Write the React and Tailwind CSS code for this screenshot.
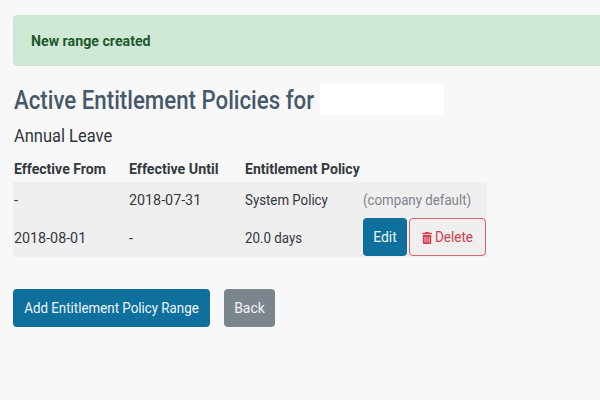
import React from "react";
import { FaTrashAlt } from "react-icons/fa";

export default function App() {
  return (
    <div className="w-[600px] h-[400px] overflow-hidden bg-[#f8f8f9] pt-[15px] pl-[13px] font-['Roboto',sans-serif] text-[#33393f] text-[14.5px]">
      <div className="w-[600px] h-[51px] flex items-center pl-[17px] pt-[2px] bg-[#d0e9d6] border border-[#c6e4ce] rounded-l-[4px] font-bold text-[#1d5a2c] text-[14.2px]">
        New range created
      </div>
      <div className="mt-[18px] h-[31px] flex items-center text-[25px] font-medium text-[#46596b] leading-none">
        <span className="ml-[1px] w-[301px] pt-[2px] whitespace-nowrap origin-left scale-x-[0.89]">Active Entitlement Policies for</span>
        <span className="ml-[5px] w-[124px] h-[31px] bg-white"></span>
      </div>
      <div className="mt-[10px] ml-[1px] text-[17.5px] leading-[22px] text-[#2f353a] origin-left scale-x-[0.942]">Annual Leave</div>
      <table className="mt-[8px] w-[474px] border-collapse table-fixed">
        <thead>
          <tr className="h-[27px] text-left font-bold text-[#33393f] text-[14.5px]">
            <th className="w-[116px] font-bold p-0 pt-[2px]"><span className="block ml-[1px] whitespace-nowrap origin-left scale-x-[0.97]">Effective From</span></th>
            <th className="w-[116px] font-bold p-0 pt-[2px]"><span className="block whitespace-nowrap origin-left scale-x-[0.98]">Effective Until</span></th>
            <th className="w-[118px] font-bold p-0 pt-[2px]"><span className="block whitespace-nowrap origin-left scale-x-[0.967]">Entitlement Policy</span></th>
            <th className="p-0"></th>
          </tr>
        </thead>
        <tbody className="bg-[#efefef]">
          <tr className="h-[36px]">
            <td className="p-0 pt-[2px] pl-[1px]">-</td>
            <td className="p-0 pt-[2px] text-[14.3px]">2018-07-31</td>
            <td className="p-0 pt-[2px]"><span className="block whitespace-nowrap origin-left scale-x-[0.915]">System Policy</span></td>
            <td className="p-0 pt-[2px] text-[#7d858c]"><span className="block whitespace-nowrap origin-left scale-x-[0.915]">(company default)</span></td>
          </tr>
          <tr className="h-[39px]">
            <td className="p-0 pt-[2px] pl-[1px] text-[14.3px]">2018-08-01</td>
            <td className="p-0 pt-[2px]">-</td>
            <td className="p-0 pt-[2px]"><span className="block whitespace-nowrap origin-left scale-x-[0.92]">20.0 days</span></td>
            <td className="p-0">
              <div className="flex items-center gap-[2px] h-[39px] pb-[1px]">
                <button className="w-[44px] h-[38px] pt-[2px] rounded-[4px] bg-[#0f6f9d] text-[#eef6fa]"><span className="block scale-x-[0.96]">Edit</span></button>
                <button className="w-[77px] h-[38px] pt-[2px] rounded-[4px] border border-[#d9606c] text-[#d23c4b]">
                  <span className="flex items-center justify-center gap-[3px] scale-x-[0.93]">
                    <FaTrashAlt className="w-[11px] h-[12px]" />
                    <span>Delete</span>
                  </span>
                </button>
              </div>
            </td>
          </tr>
        </tbody>
      </table>
      <div className="mt-[32px] flex gap-[14px]">
        <button className="w-[197px] h-[38px] pt-[2px] rounded-[4px] bg-[#0f6f9d] text-[#eef6fa]"><span className="block whitespace-nowrap scale-x-[0.92]">Add Entitlement Policy Range</span></button>
        <button className="w-[51px] h-[38px] pt-[2px] rounded-[4px] bg-[#7b858d] text-[#f2f4f5]"><span className="block scale-x-[0.96]">Back</span></button>
      </div>
    </div>
  );
}
